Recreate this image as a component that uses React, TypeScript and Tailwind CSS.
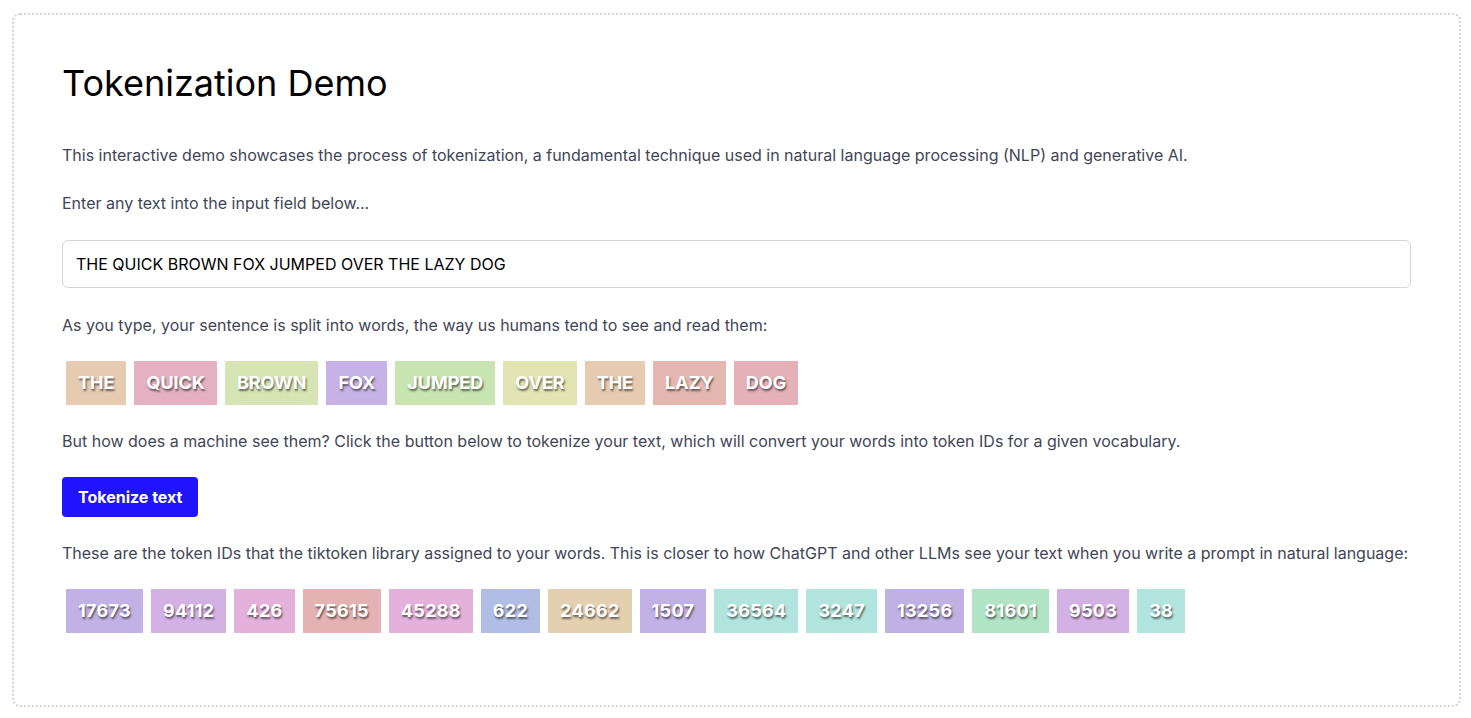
const words = [
  { text: "THE", color: "bg-[#e6cbb1]" },
  { text: "QUICK", color: "bg-[#e4b1c2]" },
  { text: "BROWN", color: "bg-[#d7e5b5]" },
  { text: "FOX", color: "bg-[#c6b2e4]" },
  { text: "JUMPED", color: "bg-[#c7e4b1]" },
  { text: "OVER", color: "bg-[#e2e4b3]" },
  { text: "THE", color: "bg-[#e6cbb1]" },
  { text: "LAZY", color: "bg-[#e4b8b1]" },
  { text: "DOG", color: "bg-[#e4b1b9]" },
];

const tokens = [
  { id: "17673", color: "bg-[#c1b1e4]" },
  { id: "94112", color: "bg-[#d3b1e4]" },
  { id: "426", color: "bg-[#e4b1da]" },
  { id: "75615", color: "bg-[#e4b2b2]" },
  { id: "45288", color: "bg-[#e4b1dc]" },
  { id: "622", color: "bg-[#b1bde4]" },
  { id: "24662", color: "bg-[#e4d0b1]" },
  { id: "1507", color: "bg-[#c1b1e4]" },
  { id: "36564", color: "bg-[#b1e4dc]" },
  { id: "3247", color: "bg-[#b1e4dd]" },
  { id: "13256", color: "bg-[#bfb1e4]" },
  { id: "81601", color: "bg-[#b1e4c5]" },
  { id: "9503", color: "bg-[#d4b1e4]" },
  { id: "38", color: "bg-[#b1e4dd]" },
];

function Chip({ label, color, numeric }: { label: string; color: string; numeric?: boolean }) {
  return (
    <span
      className={`mx-1 px-3 py-2 text-lg leading-7 font-bold text-white [text-shadow:1px_2px_2px_rgba(0,0,0,0.55)] ${
        numeric ? "tracking-[0.3px]" : ""
      } ${color}`}
    >
      {label}
    </span>
  );
}

export default function App() {
  return (
    <div className="min-h-screen bg-white font-['Inter',sans-serif]">
      <div className="ml-3 mt-[13px] h-[694px] w-[1449px] rounded-lg border-2 border-dotted border-[#d4d4d8] p-12">
        <h1 className="mb-10 text-4xl leading-10 font-normal text-black">Tokenization Demo</h1>

        <p className="mb-6 text-base text-[#3f4656]">
          This interactive demo showcases the process of tokenization, a fundamental technique used in natural language processing (NLP) and generative AI.
        </p>
        <p className="mb-[25px] text-base text-[#3f4656]">Enter any text into the input field below...</p>

        <input
          type="text"
          defaultValue="THE QUICK BROWN FOX JUMPED OVER THE LAZY DOG"
          className="mb-[25px] block h-12 w-full rounded-md border border-[#d4d4dc] px-[13px] text-base text-black outline-none"
        />

        <p className="mb-6 text-base text-[#3f4656]">
          As you type, your sentence is split into words, the way us humans tend to see and read them:
        </p>
        <div className="mb-6 flex flex-wrap">
          {words.map((w, i) => (
            <Chip key={i} label={w.text} color={w.color} />
          ))}
        </div>

        <p className="mb-6 text-base text-[#3f4656]">
          But how does a machine see them? Click the button below to tokenize your text, which will convert your words into token IDs for a given vocabulary.
        </p>
        <button className="mb-6 rounded bg-[#2014ff] px-4 py-2 text-base leading-6 font-bold text-white">
          Tokenize text
        </button>

        <p className="mb-6 text-base text-[#3f4656]">
          These are the token IDs that the tiktoken library assigned to your words. This is closer to how ChatGPT and other LLMs see your text when you write a prompt in natural language:
        </p>
        <div className="flex flex-wrap">
          {tokens.map((t, i) => (
            <Chip key={i} label={t.id} color={t.color} numeric />
          ))}
        </div>
      </div>
    </div>
  );
}
